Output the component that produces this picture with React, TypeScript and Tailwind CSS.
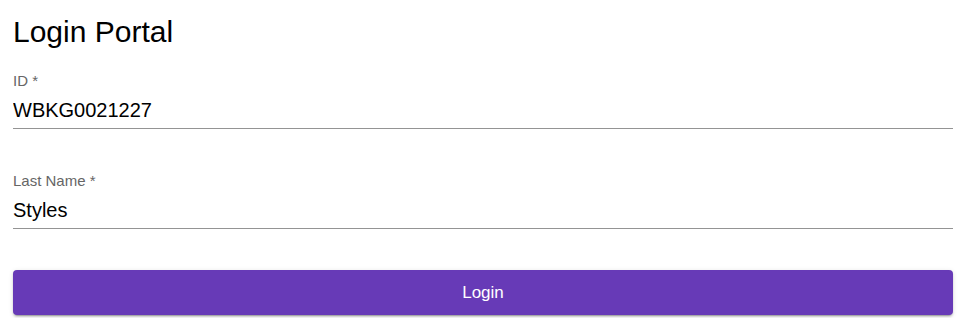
import { useState } from "react";

interface FieldProps {
  label: string;
  value: string;
  onChange: (value: string) => void;
}

function Field({ label, value, onChange }: FieldProps) {
  return (
    <label className="flex flex-col">
      <span className="h-[18px] text-[15px] leading-[18px] text-[#666666]">
        {label} *
      </span>
      <input
        value={value}
        onChange={(e) => onChange(e.target.value)}
        className="mt-[8px] h-[31px] pb-[6px] border-b border-[#949494] text-[20px] leading-[24px] text-black outline-none bg-transparent"
      />
    </label>
  );
}

function App() {
  const [id, setId] = useState("WBKG0021227");
  const [lastName, setLastName] = useState("Styles");

  return (
    <div className="min-h-screen bg-white pl-[13px] pr-[6px] pt-[14px] font-['Liberation_Sans',Arial,sans-serif]">
      <h1 className="text-[30px] leading-[36px] text-black">Login Portal</h1>
      <form
        className="mt-[22px] flex flex-col"
        onSubmit={(e) => e.preventDefault()}
      >
        <Field label="ID" value={id} onChange={setId} />
        <div className="mt-[43px]">
          <Field label="Last Name" value={lastName} onChange={setLastName} />
        </div>
        <button
          type="submit"
          className="mt-[41px] h-[45px] rounded-[4px] bg-[#673ab7] text-[17px] text-white shadow-[0px_3px_1px_-2px_rgba(0,0,0,0.2),0px_2px_2px_0px_rgba(0,0,0,0.14),0px_1px_5px_0px_rgba(0,0,0,0.12)]"
        >
          Login
        </button>
      </form>
    </div>
  );
}

export default App;
